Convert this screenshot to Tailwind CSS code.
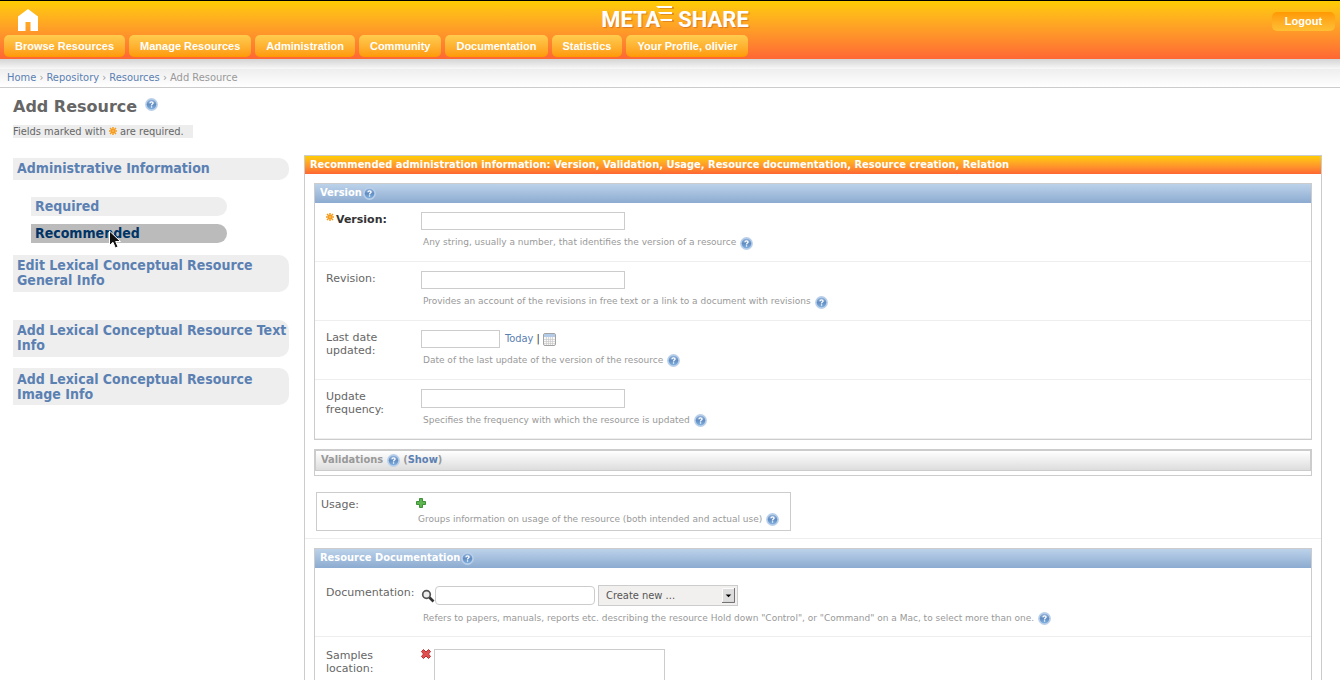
<!DOCTYPE html>
<html lang="en">
<head>
<meta charset="utf-8">
<title>Add Resource | META-SHARE</title>
<script src="https://cdn.jsdelivr.net/npm/@tailwindcss/browser@4"></script>
</head>
<body class="bg-white font-['DejaVu_Sans',sans-serif] text-[11px] leading-[13px] text-[#666]">

<svg class="absolute size-0" aria-hidden="true">
  <defs>
    <linearGradient id="ball" x1="0" y1="0" x2="0" y2="1">
      <stop offset="0" stop-color="#93b4dc"/><stop offset="0.5" stop-color="#628dc2"/><stop offset="1" stop-color="#7fb0e0"/>
    </linearGradient>
    <symbol id="help" viewBox="0 0 13 13">
      <circle cx="6.500" cy="6.500" r="6.400" fill="#b9cfe9"/>
      <circle cx="6.500" cy="6.500" r="4.800" fill="url(#ball)"/>
      <path d="M4.900 5.200Q5 3.900 6.500 3.900Q8.100 3.900 8.100 5.100Q8.100 5.800 7.200 6.300Q6.500 6.700 6.500 7.400" fill="none" stroke="#fff" stroke-width="1.300"/>
      <rect x="5.900" y="8.300" width="1.300" height="1.300" fill="#fff"/>
    </symbol>
    <symbol id="star" viewBox="0 0 8 8">
      <path d="M4 0V8M0 4H8M1 1L7 7M7 1L1 7" stroke="#f59c1c" stroke-width="1.500"/>
      <circle cx="4" cy="4" r=".8" fill="#fbd08a"/>
    </symbol>
  </defs>
</svg>

<header class="border-t border-black bg-linear-to-b from-[#ffcc00] to-[#ff6633] font-['Liberation_Sans',Arial,sans-serif] font-bold text-white">
  <div class="grid h-[34px] grid-cols-[1fr_auto_1fr] items-start">
    <a href="#" aria-label="Home" class="ml-[18px] mt-2 w-5">
      <svg viewBox="0 0 20 22" class="h-[22px] w-5"><path d="M10 0L20 7.500V22H12.500V13H7.500V22H0V7.500Z" fill="#fff"/></svg>
    </a>
    <a href="#" class="mt-1 ml-2.5 flex items-start font-['Roboto',sans-serif] text-[22px] leading-[30px] font-bold text-shadow-[1px_1px_1px_#c8641eaa]">
      <span>META</span>
      <svg viewBox="0 0 18 18" class="-ml-1 mr-1 h-[18px] w-[18px]" aria-hidden="true">
        <path d="M2 2H18V4H4ZM4 8H18V10H5ZM6 15H18V17H7Z" fill="#c8641e" opacity=".5"/>
        <path d="M0 1H16V3H2ZM2 7H16V9H4ZM4 14H16V16H5Z" fill="#fff"/>
      </svg>
      <span>SHARE</span>
    </a>
    <button type="button" class="mr-[5px] mt-[11px] h-[19px] w-[63px] justify-self-end rounded-[5px] bg-linear-to-b from-[#ff9900] to-[#ffbf33] text-[11px] leading-[19px] font-bold">Logout</button>
  </div>
  <nav class="flex gap-1 px-1 pb-0.5 leading-[22px]">
    <a href="#" class="rounded-[5px] bg-linear-to-b from-[#ffcc4d] to-[#ff9900] px-[11px]">Browse Resources</a>
    <a href="#" class="rounded-[5px] bg-linear-to-b from-[#ffcc4d] to-[#ff9900] px-[11px]">Manage Resources</a>
    <a href="#" class="rounded-[5px] bg-linear-to-b from-[#ffcc4d] to-[#ff9900] px-[11px]">Administration</a>
    <a href="#" class="rounded-[5px] bg-linear-to-b from-[#ffcc4d] to-[#ff9900] px-[11px]">Community</a>
    <a href="#" class="rounded-[5px] bg-linear-to-b from-[#ffcc4d] to-[#ff9900] px-[11px]">Documentation</a>
    <a href="#" class="rounded-[5px] bg-linear-to-b from-[#ffcc4d] to-[#ff9900] px-[11px]">Statistics</a>
    <a href="#" class="rounded-[5px] bg-linear-to-b from-[#ffcc4d] to-[#ff9900] px-[11px]">Your Profile, olivier</a>
  </nav>
</header>
<div class="h-2.5 bg-linear-to-b from-[#d4d4d4] to-[#f8f8f8]"></div>
<nav aria-label="Breadcrumb" class="border-b border-[#ccc] bg-linear-to-b from-[#eee] to-white px-[7px] pt-0.5 pb-[3px] font-['DejaVu_Sans_Condensed','DejaVu_Sans',sans-serif] text-[#999]">
  <a href="#" class="text-[#5b80b2]">Home</a> › <a href="#" class="text-[#5b80b2]">Repository</a> › <a href="#" class="text-[#5b80b2]">Resources</a> › Add Resource
</nav>

<main class="pl-[13px] pr-[18px]">
  <div class="flex items-start gap-2 pt-[9px]">
    <h1 class="text-[16px] leading-5 font-bold">Add Resource</h1>
    <svg class="mt-px size-[13px]" role="img" aria-label="Help"><use href="#help"/></svg>
  </div>
  <p class="mt-2 w-[180px] bg-[#ededed] font-['DejaVu_Sans_Condensed','DejaVu_Sans',sans-serif]">Fields marked with <svg class="inline size-2 align-baseline" role="img" aria-label="star"><use href="#star"/></svg> are required.</p>

  <div class="mt-[17px] flex items-start gap-[15px]">
    <nav aria-label="Sections" class="mt-[3px] w-[276px] shrink-0 font-['DejaVu_Sans_Condensed','DejaVu_Sans',sans-serif] text-[14px] leading-[15px] font-bold text-[#5b80b2]">
      <a href="#" class="block rounded-r-[10px] bg-[#eee] pl-1 pt-[3px] pb-1">Administrative Information</a>
      <div class="relative mt-[17px] ml-[18px] flex w-[196px] flex-col gap-2">
        <a href="#" class="block rounded-r-[10px] bg-[#eee] pl-1 pt-0.5 pb-0.5">Required</a>
        <a href="#" class="block rounded-r-[10px] bg-[#bbb] pl-1 pt-0.5 pb-0.5 text-[#036]">Recommended</a>
        <svg class="absolute top-[33px] left-[78px] h-[19px] w-3" viewBox="0 0 12 19" aria-hidden="true"><path d="M.5 1V15.500L4 12.300L6.300 18L9 16.800L6.700 11.500H11.500Z" fill="#111" stroke="#fff"/></svg>
      </div>
      <a href="#" class="mt-3 block rounded-r-[10px] bg-[#eee] pl-1 pt-[3px] pb-1">Edit Lexical Conceptual Resource General Info</a>
      <a href="#" class="mt-7 block rounded-r-[10px] bg-[#eee] pl-1 pt-[3px] pb-1">Add Lexical Conceptual Resource Text Info</a>
      <a href="#" class="mt-[11px] block rounded-r-[10px] bg-[#eee] pl-1 pt-1 pb-[3px]">Add Lexical Conceptual Resource Image Info</a>
    </nav>

    <form class="min-w-0 flex-1 border border-[#ccc]">
      <h2 class="bg-linear-to-b from-[#ffcc00] to-[#ff6633] px-[5px] pt-0.5 pb-[3px] font-['DejaVu_Sans_Condensed','DejaVu_Sans',sans-serif] font-bold text-white">Recommended administration information: Version, Validation, Usage, Resource documentation, Resource creation, Relation</h2>

      <section class="mx-[9px] mt-[9px] border border-[#ccc]">
        <h3 class="flex h-[19px] items-start bg-linear-to-b from-[#bcd2ea] to-[#8cabd0] px-[5px] pt-0.5 font-['DejaVu_Sans_Condensed','DejaVu_Sans',sans-serif] font-bold text-white">Version<svg class="mt-px ml-px size-[13px]" role="img" aria-label="Help"><use href="#help"/></svg></h3>

        <div class="flex h-[59px] border-b border-[#eee] pt-[9px] pl-[11px]">
          <label for="version" class="flex w-[95px] items-start pt-px font-bold text-[#333]"><svg class="mr-0.5 size-2" role="img" aria-label="required"><use href="#star"/></svg>Version:</label>
          <div>
            <input id="version" type="text" class="block h-[18px] w-[204px] border border-[#ccc] px-1">
            <p class="mt-[6px] ml-0.5 flex items-start gap-1 text-[9px] text-[#999]">Any string, usually a number, that identifies the version of a resource <svg class="mt-px size-[13px]" role="img" aria-label="Help"><use href="#help"/></svg></p>
          </div>
        </div>
        <div class="flex h-[59px] border-b border-[#eee] pt-[9px] pl-[11px]">
          <label for="revision" class="w-[95px] pt-px pr-2">Revision:</label>
          <div>
            <input id="revision" type="text" class="block h-[18px] w-[204px] border border-[#ccc] px-1">
            <p class="mt-[6px] ml-0.5 flex items-start gap-1 text-[9px] text-[#999]">Provides an account of the revisions in free text or a link to a document with revisions <svg class="mt-px size-[13px]" role="img" aria-label="Help"><use href="#help"/></svg></p>
          </div>
        </div>
        <div class="flex h-[59px] border-b border-[#eee] pt-[9px] pl-[11px]">
          <label for="updated" class="w-[95px] pt-px pr-2">Last date updated:</label>
          <div>
            <div class="flex items-start leading-[18px] font-['DejaVu_Sans_Condensed','DejaVu_Sans',sans-serif]">
              <input id="updated" type="text" class="block h-[18px] w-[79px] border border-[#ccc] px-1">
              <a href="#" class="ml-[5px] text-[#5b80b2]">Today</a><span class="ml-[3px] text-[#333]">|</span>
              <button type="button" aria-label="Calendar" class="mt-[3px] ml-[3px]"><svg viewBox="0 0 13 13" class="block size-[13px]"><rect x=".5" y=".5" width="12" height="12" rx="1.500" fill="#f8f8f8" stroke="#a3a3a3"/><path d="M1 1H12V4H1Z" fill="#b3cbe6"/><path d="M1 6.500H12M1 8.500H12M1 10.500H12M3.500 4V12M5.500 4V12M7.500 4V12M9.500 4V12" stroke="#c4c4c4" stroke-width=".6"/></svg></button>
            </div>
            <p class="mt-[6px] ml-0.5 flex items-center gap-1 text-[9px] text-[#999]">Date of the last update of the version of the resource <svg class="size-[13px]" role="img" aria-label="Help"><use href="#help"/></svg></p>
          </div>
        </div>
        <div class="flex h-[59px] border-b border-[#eee] pt-[9px] pl-[11px]">
          <label for="frequency" class="w-[95px] pt-px pr-2">Update frequency:</label>
          <div>
            <input id="frequency" type="text" class="block h-[19px] w-[204px] border border-[#ccc] px-1">
            <p class="mt-[6px] ml-0.5 flex items-center gap-1 text-[9px] text-[#999]">Specifies the frequency with which the resource is updated <svg class="size-[13px]" role="img" aria-label="Help"><use href="#help"/></svg></p>
          </div>
        </div>
      </section>

      <section class="mx-[9px] mt-[9px] border border-[#ccc] pb-1">
        <h3 class="flex h-[21px] items-start border border-[#ccc] bg-linear-to-b from-white to-[#ddd] px-[5px] pt-0.5 font-['DejaVu_Sans_Condensed','DejaVu_Sans',sans-serif] font-bold text-[#999]">Validations <svg class="mt-px mr-[3px] ml-1 size-[13px]" role="img" aria-label="Help"><use href="#help"/></svg> (<a href="#" class="text-[#5b80b2]">Show</a>)</h3>
      </section>

      <div class="border-b border-[#eee] px-[11px] pt-4 pb-[7px]">
        <div class="flex h-[39px] w-[475px] border border-[#ccc] pt-[5px] pl-1">
          <span class="w-[95px]">Usage:</span>
          <div>
            <button type="button" aria-label="Add usage" class="block"><svg viewBox="0 0 10 10" class="block size-2.5"><path d="M3.500 .5H6.500V3.500H9.500V6.500H6.500V9.500H3.500V6.500H.5V3.500H3.500Z" fill="#5fb550" stroke="#3d8f38"/></svg></button>
            <p class="mt-[5px] ml-0.5 flex items-center gap-1 text-[9px] text-[#999]">Groups information on usage of the resource (both intended and actual use) <svg class="size-[13px]" role="img" aria-label="Help"><use href="#help"/></svg></p>
          </div>
        </div>
      </div>

      <section class="mx-[9px] mt-[9px] border border-b-0 border-[#ccc]">
        <h3 class="flex h-[19px] items-start bg-linear-to-b from-[#bcd2ea] to-[#8cabd0] px-[5px] pt-0.5 font-['DejaVu_Sans_Condensed','DejaVu_Sans',sans-serif] font-bold text-white">Resource Documentation<svg class="mt-px ml-px size-[13px]" role="img" aria-label="Help"><use href="#help"/></svg></h3>
        <div class="flex h-[69px] border-b border-[#eee] pt-[17px] pl-[11px]">
          <label for="documentation" class="w-[95px] pt-px">Documentation:</label>
          <div>
            <div class="flex items-center">
              <svg viewBox="0 0 14 14" class="size-3.5" aria-hidden="true"><circle cx="5.500" cy="5.500" r="3.800" fill="#eee" stroke="#555" stroke-width="1.700"/><path d="M8.500 8.500L12.500 12.500" stroke="#333" stroke-width="2.600"/></svg>
              <input id="documentation" type="text" class="h-[19px] w-40 rounded-[4px] border border-[#ccc] px-1">
              <div class="relative ml-[3px]">
                <select aria-label="Create new documentation" class="block h-[21px] w-[140px] appearance-none border border-[#ccc] bg-[#f1f0ee] pl-[7px] font-['DejaVu_Sans_Condensed','DejaVu_Sans',sans-serif] text-[#555]"><option>Create new ...</option></select>
                <svg viewBox="0 0 14 16" class="pointer-events-none absolute top-[3px] right-[3px] h-[15px] w-[13px]" aria-hidden="true"><path d="M0 0H14V16H0Z" fill="#ddd"/><path d="M.5 15V.5H13" stroke="#fff" fill="none"/><path d="M0 15.500H13.500V0" stroke="#666" fill="none"/><path d="M4 7H10L7 10Z" fill="#000"/></svg>
              </div>
            </div>
            <p class="mt-[6px] ml-0.5 flex items-center gap-1 text-[9px] text-[#999]">Refers to papers, manuals, reports etc. describing the resource Hold down "Control", or "Command" on a Mac, to select more than one. <svg class="size-[13px]" role="img" aria-label="Help"><use href="#help"/></svg></p>
          </div>
        </div>
        <div class="flex pt-3 pl-[11px]">
          <label for="samples" class="w-[95px] pr-4">Samples location:</label>
          <button type="button" aria-label="Remove" class="mr-[3px] self-start"><svg viewBox="0 0 10 10" class="block size-2.5"><path d="M5 3L7.500 .5L9.500 2.500L7.500 5L9.500 7.500L7.500 9.500L5 7L2.500 9.500L.5 7.500L2.500 5L.5 2.500L2.500 .5Z" fill="#e05050" stroke="#b93030"/></svg></button>
          <textarea id="samples" class="h-[31px] w-[231px] resize-none border border-b-0 border-[#ccc] px-1"></textarea>
        </div>
      </section>
    </form>
  </div>
</main>
</body>
</html>
